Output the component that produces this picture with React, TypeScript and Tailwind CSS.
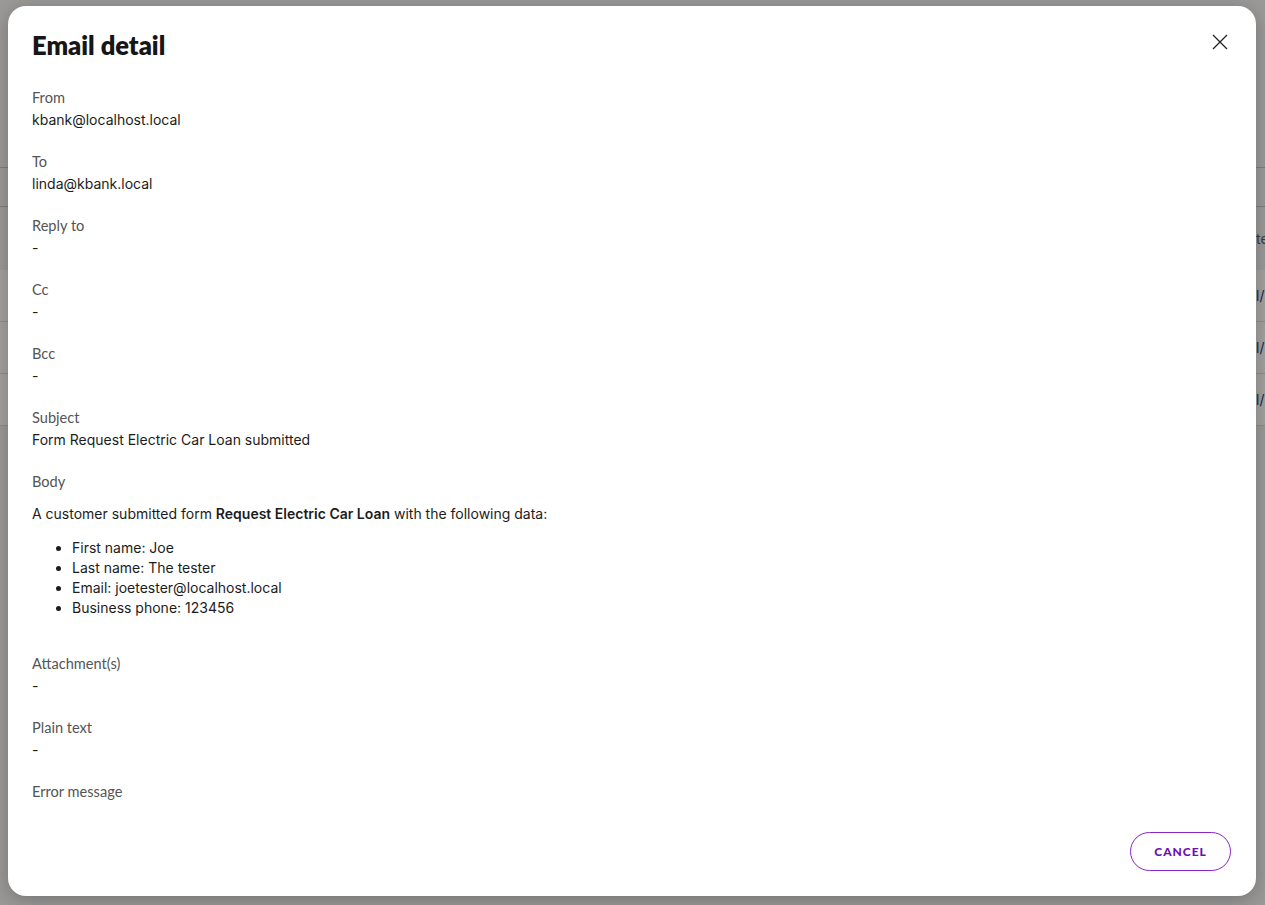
type Field = { label: string; value?: string };

const topFields: Field[] = [
  { label: "From", value: "kbank@localhost.local" },
  { label: "To", value: "linda@kbank.local" },
  { label: "Reply to", value: "-" },
  { label: "Cc", value: "-" },
  { label: "Bcc", value: "-" },
  { label: "Subject", value: "Form Request Electric Car Loan submitted" },
];

const bottomFields: Field[] = [
  { label: "Attachment(s)", value: "-" },
  { label: "Plain text", value: "-" },
  { label: "Error message" },
];

const bodyItems = [
  "First name: Joe",
  "Last name: The tester",
  "Email: joetester@localhost.local",
  "Business phone: 123456",
];

function FieldBlock({ label, value }: Field) {
  return (
    <div className="flex flex-col gap-[2px]">
      <div className="text-[14.6px] leading-[20px] text-[#555555] font-['Lato',sans-serif]">
        {label}
      </div>
      {value !== undefined && (
        <div className="text-[14px] leading-[20px] text-[#1c1c1c]">{value}</div>
      )}
    </div>
  );
}

function Backdrop() {
  const rows = ["l/", "l/", "l/"];
  return (
    <div className="flex h-full flex-col pt-[167px] font-['Inter',sans-serif] text-[14px] text-[#3a3a3a]">
      <div className="h-[39px] border-t border-[#7e7d7c]" />
      <div className="grid h-[64px] grid-cols-[1256px_1fr] items-center border-t border-[#7e7d7c]">
        <span />
        <span className="overflow-hidden whitespace-nowrap">te</span>
      </div>
      {rows.map((r, i) => (
        <div
          key={i}
          className="grid h-[52px] grid-cols-[1256px_1fr] items-center border-b border-[#8f8e8d] bg-[#a3a2a1]"
        >
          <span />
          <span className="overflow-hidden whitespace-nowrap text-[#23234a]">
            {r}
          </span>
        </div>
      ))}
    </div>
  );
}

export default function App() {
  return (
    <div className="relative h-[905px] w-full overflow-hidden bg-[#9b9a99] font-['Inter',sans-serif]">
      <Backdrop />
      <div className="absolute left-[8px] top-[6px] flex h-[890px] w-[1248px] flex-col rounded-[18px] bg-white shadow-[0_4px_20px_rgba(0,0,0,0.25)]">
        <div className="flex items-start justify-between pl-[24px] pr-[28px] pt-[23px]">
          <h1 className="text-[25.5px] font-extrabold leading-[32px] text-[#161616] font-['Lato',sans-serif]">
            Email detail
          </h1>
          <button className="mt-[5px] text-[#222]" aria-label="Close">
            <svg width="16" height="16" viewBox="0 0 16 16" fill="none">
              <path d="M1 1L15 15M15 1L1 15" stroke="currentColor" strokeWidth="1.3" />
            </svg>
          </button>
        </div>

        <div className="flex flex-1 flex-col gap-[22px] px-[24px] pt-[27px]">
          {topFields.map((f) => (
            <FieldBlock key={f.label} {...f} />
          ))}

          <div className="flex flex-col">
            <div className="text-[14.6px] leading-[20px] text-[#555555] font-['Lato',sans-serif]">
              Body
            </div>
            <p className="mt-[12px] text-[14px] leading-[20px] text-[#1c1c1c]">
              A customer submitted form <b className="font-semibold">Request Electric Car Loan</b> with
              the following data:
            </p>
            <ul className="mb-[14px] mt-[14px] list-disc pl-[40px] text-[14px] leading-[20px] text-[#1c1c1c]">
              {bodyItems.map((it) => (
                <li key={it}>{it}</li>
              ))}
            </ul>
          </div>

          {bottomFields.map((f) => (
            <FieldBlock key={f.label} {...f} />
          ))}
        </div>

        <div className="flex justify-end px-[25px] pb-[25px]">
          <button className="h-[39px] w-[101px] rounded-full border border-[#8a24c6] text-[12px] font-black tracking-[0.08em] text-[#6c0fb3] font-['Lato',sans-serif]">
            CANCEL
          </button>
        </div>
      </div>
    </div>
  );
}
